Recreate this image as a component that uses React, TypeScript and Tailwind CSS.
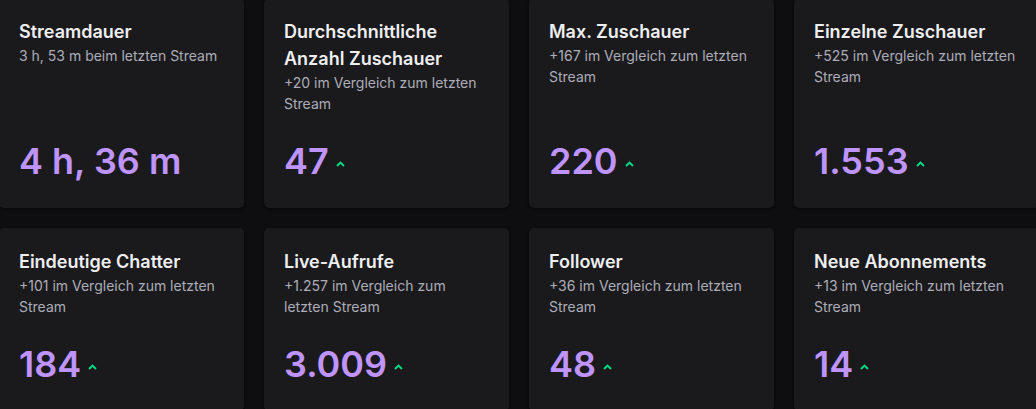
import React from "react";

type Stat = {
  title: string;
  note: string;
  value: string;
  up?: boolean;
};

const stats: Stat[] = [
  { title: "Streamdauer", note: "3 h, 53 m beim letzten Stream", value: "4 h, 36 m" },
  {
    title: "Durchschnittliche Anzahl Zuschauer",
    note: "+20 im Vergleich zum letzten Stream",
    value: "47",
    up: true,
  },
  { title: "Max. Zuschauer", note: "+167 im Vergleich zum letzten Stream", value: "220", up: true },
  { title: "Einzelne Zuschauer", note: "+525 im Vergleich zum letzten Stream", value: "1.553", up: true },
  { title: "Eindeutige Chatter", note: "+101 im Vergleich zum letzten Stream", value: "184", up: true },
  { title: "Live-Aufrufe", note: "+1.257 im Vergleich zum letzten Stream", value: "3.009", up: true },
  { title: "Follower", note: "+36 im Vergleich zum letzten Stream", value: "48", up: true },
  { title: "Neue Abonnements", note: "+13 im Vergleich zum letzten Stream", value: "14", up: true },
];

function UpArrow() {
  return (
    <svg width="9" height="6" viewBox="0 0 9 6" className="ml-[7px] mt-[6px]">
      <path d="M1 5 L4.5 1.6 L8 5" fill="none" stroke="#00db84" strokeWidth="2" />
    </svg>
  );
}

function StatCard({ stat }: { stat: Stat }) {
  return (
    <div className="flex flex-col rounded-[5px] bg-[#1a1a1d] p-5 shadow-[0_1px_3px_rgba(0,0,0,0.6)]">
      <div className="text-[18px] leading-[27px] font-semibold text-[#efeff1]">{stat.title}</div>
      <div className="text-[14px] leading-[21px] text-[#adadb8]">{stat.note}</div>
      <div className="mt-auto flex items-center pt-5">
        <span className="text-[36px] leading-[54px] font-semibold text-[#bf94ff]">{stat.value}</span>
        {stat.up && <UpArrow />}
      </div>
    </div>
  );
}

export default function App() {
  return (
    <div
      className="h-[409px] w-[1036px] overflow-hidden bg-[#0e0e10]"
      style={{ fontFamily: "Inter, 'Noto Sans', sans-serif" }}
    >
      <div className="-mt-[2px] -ml-px grid w-[1040px] grid-cols-[repeat(4,245px)] gap-5">
        {stats.map((s) => (
          <StatCard key={s.title} stat={s} />
        ))}
      </div>
    </div>
  );
}
